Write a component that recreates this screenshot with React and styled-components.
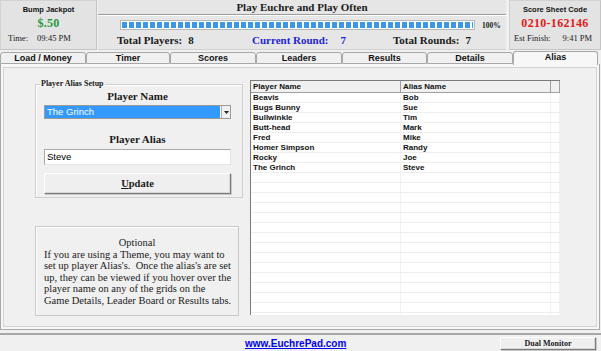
import React from "react";
import styled, { createGlobalStyle } from "styled-components";

const serif = `"Liberation Serif", "Times New Roman", serif`;
const sans = `"Liberation Sans", Arial, sans-serif`;

const GlobalStyle = createGlobalStyle`
  html, body {
    margin: 0;
    padding: 0;
    background: #f0f0f0;
  }
  body {
    width: 601px;
    height: 351px;
    overflow: hidden;
    font-family: ${sans};
    color: #111;
  }
`;

const Window = styled.div`
  width: 601px;
  height: 351px;
  display: flex;
  flex-direction: column;
  background: #f0f0f0;
`;

/* ---------- header ---------- */

const Header = styled.div`
  height: 50px;
  display: flex;
  background: #f0f0f0;
`;

const SideBox = styled.div`
  width: ${(p) => p.$w}px;
  box-sizing: border-box;
  background: #e3e3e3;
  border: 1px solid #d2d2d2;
  border-right-color: #c4c4c4;
  border-bottom-color: #c4c4c4;
  display: flex;
  flex-direction: column;
  align-items: center;
  padding-top: 4px;
`;

const SideLabel = styled.div`
  font-family: ${sans};
  font-weight: bold;
  font-size: 7.5px;
  color: #111;
`;

const BigValue = styled.div`
  font-family: ${serif};
  font-weight: bold;
  font-size: ${(p) => p.$size || 12}px;
  color: ${(p) => p.$color};
  margin-top: 2px;
  letter-spacing: 0.3px;
`;

const InfoRow = styled.div`
  align-self: stretch;
  display: flex;
  gap: ${(p) => p.$gap}px;
  padding-left: ${(p) => p.$pl}px;
  margin-top: 2px;
  font-family: ${serif};
  font-size: 8.5px;
  color: #222;
`;

const Center = styled.div`
  flex: 1;
  margin: 0 3px 0 1px;
  background: #e6e6e6;
  border-bottom: 1px solid #d0d0d0;
  display: flex;
  flex-direction: column;
`;

const Title = styled.div`
  height: 14px;
  line-height: 14px;
  text-align: center;
  font-family: ${serif};
  font-weight: bold;
  font-size: 11px;
  color: #1a1a1a;
  border-bottom: 1px solid #9c9c9c;
  box-shadow: 0 1px 0 #fff;
`;

const ProgressRow = styled.div`
  display: flex;
  align-items: center;
  padding-left: 22px;
  margin-top: 5px;
`;

const Bar = styled.div`
  width: 355px;
  height: 10px;
  box-sizing: border-box;
  border: 1px solid #b8b8b8;
  background: #fff;
  padding: 1px;
`;

const Fill = styled.div`
  height: 100%;
  background: repeating-linear-gradient(
    90deg,
    #3c97e6 0px,
    #3c97e6 5px,
    #ffffff 5px,
    #ffffff 7px
  );
`;

const Percent = styled.span`
  margin-left: 7px;
  font-family: ${serif};
  font-weight: bold;
  font-size: 7.5px;
  color: #222;
`;

const StatsRow = styled.div`
  display: flex;
  padding-left: 19px;
  margin-top: 4px;
`;

const Stat = styled.div`
  width: ${(p) => p.$w}px;
  display: flex;
  font-family: ${serif};
  font-weight: bold;
  font-size: 11px;
  color: ${(p) => p.$color || "#1a1a1a"};
`;

const StatValue = styled.span`
  margin-left: ${(p) => p.$gap}px;
`;

/* ---------- tabs ---------- */

const Tabs = styled.div`
  height: 13px;
  display: flex;
  align-items: flex-end;
  margin-top: 1px;
  position: relative;
  z-index: 1;
`;

const Tab = styled.div`
  width: ${(p) => p.$w}px;
  box-sizing: border-box;
  height: ${(p) => (p.$active ? 14 : 12)}px;
  margin-bottom: ${(p) => (p.$active ? -1 : 0)}px;
  line-height: 11px;
  text-align: center;
  font-family: ${sans};
  font-weight: bold;
  font-size: 9px;
  color: #111;
  background: ${(p) => (p.$active ? "#f7f7f7" : "#f0f0f0")};
  border: 1px solid #a8a8a8;
  border-bottom: ${(p) => (p.$active ? "none" : "1px solid #a8a8a8")};
  border-radius: 3px 3px 0 0;
`;

/* ---------- main panel ---------- */

const Panel = styled.div`
  height: 266px;
  box-sizing: border-box;
  margin: 0 1px 0 0;
  border: 1px solid #a8a8a8;
  border-top: none;
  background: #f7f7f7;
  padding: 3px 2px 2px 2px;
`;

const Inner = styled.div`
  height: 100%;
  box-sizing: border-box;
  border: 1px solid #d4d4d4;
  background: #f0f0f0;
  display: flex;
  padding: 12px 0 0 31px;
`;

const LeftCol = styled.div`
  width: 208px;
  display: flex;
  flex-direction: column;
`;

const Group = styled.fieldset`
  margin: 0;
  padding: 0 11px 5px 8px;
  height: 118px;
  box-sizing: border-box;
  border: 1px solid #d0d0d0;
  box-shadow: inset 1px 1px 0 #fff;
  display: flex;
  flex-direction: column;

  legend {
    font-family: ${serif};
    font-weight: bold;
    font-size: 8px;
    color: #1a1a1a;
    padding: 0 1px;
    margin-left: -4px;
    line-height: 8px;
  }
`;

const FieldLabel = styled.div`
  text-align: center;
  font-family: ${serif};
  font-weight: bold;
  font-size: 11px;
  color: #1a1a1a;
  margin-top: ${(p) => p.$mt}px;
  height: 13px;
  line-height: 13px;
`;

const Select = styled.div`
  margin-top: 2px;
  height: 14px;
  box-sizing: border-box;
  display: flex;
  border: 1px solid #9a9a9a;
  background: #fff;
`;

const SelectValue = styled.div`
  flex: 1;
  background: #3399ff;
  color: #fff;
  font-family: ${sans};
  font-size: 9.5px;
  line-height: 12px;
  padding-left: 2px;
  margin: 0 1px 0 0;
`;

const ArrowBtn = styled.div`
  width: 8px;
  background: #f0f0f0;
  border-left: 1px solid #b0b0b0;
  display: flex;
  align-items: center;
  justify-content: center;
`;

const TextBox = styled.div`
  margin-top: 3px;
  height: 16px;
  box-sizing: border-box;
  border: 1px solid #a8a8a8;
  border-right-color: #e4e4e4;
  border-bottom-color: #e4e4e4;
  background: #fff;
  font-family: ${sans};
  font-size: 9.5px;
  line-height: 14px;
  padding-left: 2px;
  color: #000;
`;

const Button = styled.div`
  margin-top: ${(p) => p.$mt || 0}px;
  height: ${(p) => p.$h}px;
  width: ${(p) => (p.$w ? `${p.$w}px` : "auto")};
  box-sizing: border-box;
  background: #efefef;
  border: 1px solid #fff;
  border-right-color: #7a7a7a;
  border-bottom-color: #7a7a7a;
  box-shadow: 1px 1px 0 #c8c8c8, inset -1px -1px 0 #d8d8d8;
  display: flex;
  align-items: center;
  justify-content: center;
  font-family: ${serif};
  font-weight: bold;
  font-size: ${(p) => p.$size || 10.5}px;
  color: #1a1a1a;

  u {
    text-decoration: underline;
  }
`;

const Note = styled.div`
  margin-top: 28px;
  width: 204px;
  height: 90px;
  box-sizing: border-box;
  border: 1px solid #c8c8c8;
  box-shadow: inset 1px 1px 0 #fff;
  padding: 10px 0 0 8px;
  font-family: ${serif};
  font-size: 10.5px;
  line-height: 11.5px;
  color: #1a1a1a;
  white-space: nowrap;
`;

const NoteTitle = styled.div`
  text-align: center;
  padding-right: 8px;
`;

/* ---------- grid ---------- */

const Grid = styled.div`
  margin-left: 7px;
  width: 310px;
  height: 235px;
  box-sizing: border-box;
  border-left: 1px solid #7a7a7a;
  border-top: 1px solid #7a7a7a;
  background: #fff;
  overflow: hidden;
`;

const Row = styled.div`
  display: grid;
  grid-template-columns: 150px 150px 9px;
  height: ${(p) => (p.$head ? 12 : 10)}px;
  box-sizing: border-box;
  background: ${(p) => (p.$head ? "#f0f0f0" : "#fff")};
  border-bottom: 1px solid ${(p) => (p.$head ? "#a0a0a0" : "#eeeeee")};
`;

const Cell = styled.div`
  font-family: ${sans};
  font-weight: bold;
  font-size: 8px;
  line-height: ${(p) => (p.$head ? 11 : 9)}px;
  padding-left: 2px;
  color: #111;
  border-right: 1px solid ${(p) => (p.$head ? "#a0a0a0" : "#f2f2f2")};
  white-space: nowrap;
  overflow: hidden;
`;

/* ---------- footer ---------- */

const Footer = styled.div`
  flex: 1;
  display: flex;
  align-items: center;
  border-top: 2px solid #a8a8a8;
  margin-top: 3px;
`;

const Link = styled.a`
  margin-left: 245px;
  font-family: ${sans};
  font-weight: bold;
  font-size: 10px;
  color: #0000ee;
  text-decoration: underline;
`;

const FooterBtn = styled(Button)`
  margin-left: auto;
  margin-right: 5px;
  font-size: 8px;
`;

const players = [
  ["Beavis", "Bob"],
  ["Bugs Bunny", "Sue"],
  ["Bullwinkle", "Tim"],
  ["Butt-head", "Mark"],
  ["Fred", "Mike"],
  ["Homer Simpson", "Randy"],
  ["Rocky", "Joe"],
  ["The Grinch", "Steve"],
];

const tabs = [
  ["Load / Money", 86],
  ["Timer", 84],
  ["Scores", 86],
  ["Leaders", 86],
  ["Results", 85],
  ["Details", 86],
  ["Alias", 85],
];

const noteLines = [
  "If you are using a Theme, you may want to",
  "set up player Alias's.\u00a0 Once the alias's are set",
  "up, they can be viewed if you hover over the",
  "player name on any of the grids on the",
  "Game Details, Leader Board or Results tabs.",
];

export default function App() {
  const emptyRows = Array.from({ length: 15 });

  return (
    <Window>
      <GlobalStyle />
      <Header>
        <SideBox $w={97}>
          <SideLabel>Bump Jackpot</SideLabel>
          <BigValue $color="#1e9a3c" $size={12}>$.50</BigValue>
          <InfoRow $pl={7} $gap={9}>
            <span>Time:</span>
            <span>09:45 PM</span>
          </InfoRow>
        </SideBox>

        <Center>
          <Title>Play Euchre and Play Often</Title>
          <ProgressRow>
            <Bar>
              <Fill />
            </Bar>
            <Percent>100%</Percent>
          </ProgressRow>
          <StatsRow>
            <Stat $w={135}>
              Total Players:<StatValue $gap={6}>8</StatValue>
            </Stat>
            <Stat $w={141} $color="#1f1fd6">
              Current Round:<StatValue $gap={12}>7</StatValue>
            </Stat>
            <Stat $w={100}>
              Total Rounds:<StatValue $gap={6}>7</StatValue>
            </Stat>
          </StatsRow>
        </Center>

        <SideBox $w={92}>
          <SideLabel>Score Sheet Code</SideLabel>
          <BigValue $color="#e41b1b" $size={12}>0210-162146</BigValue>
          <InfoRow $pl={4} $gap={12}>
            <span>Est Finish:</span>
            <span>9:41 PM</span>
          </InfoRow>
        </SideBox>
      </Header>

      <Tabs>
        {tabs.map(([label, w]) => (
          <Tab key={label} $w={w} $active={label === "Alias"}>
            {label}
          </Tab>
        ))}
      </Tabs>

      <Panel>
        <Inner>
          <LeftCol>
            <Group>
              <legend>Player Alias Setup</legend>
              <FieldLabel $mt={2}>Player Name</FieldLabel>
              <Select>
                <SelectValue>The Grinch</SelectValue>
                <ArrowBtn>
                  <svg width="5" height="3" viewBox="0 0 5 3">
                    <path d="M0 0h5L2.5 3z" fill="#222" />
                  </svg>
                </ArrowBtn>
              </Select>
              <FieldLabel $mt={14}>Player Alias</FieldLabel>
              <TextBox>Steve</TextBox>
              <Button $mt={8} $h={21}>
                <span>
                  <u>U</u>pdate
                </span>
              </Button>
            </Group>

            <Note>
              <NoteTitle>Optional</NoteTitle>
              {noteLines.map((line) => (
                <div key={line}>{line}</div>
              ))}
            </Note>
          </LeftCol>

          <Grid>
            <Row $head>
              <Cell $head>Player Name</Cell>
              <Cell $head>Alias Name</Cell>
              <Cell $head />
            </Row>
            {players.map(([name, alias]) => (
              <Row key={name}>
                <Cell>{name}</Cell>
                <Cell>{alias}</Cell>
                <Cell />
              </Row>
            ))}
            {emptyRows.map((_, i) => (
              <Row key={i}>
                <Cell />
                <Cell />
                <Cell />
              </Row>
            ))}
          </Grid>
        </Inner>
      </Panel>

      <Footer>
        <Link href="#">www.EuchrePad.com</Link>
        <FooterBtn $w={96} $h={13}>Dual Monitor</FooterBtn>
      </Footer>
    </Window>
  );
}
